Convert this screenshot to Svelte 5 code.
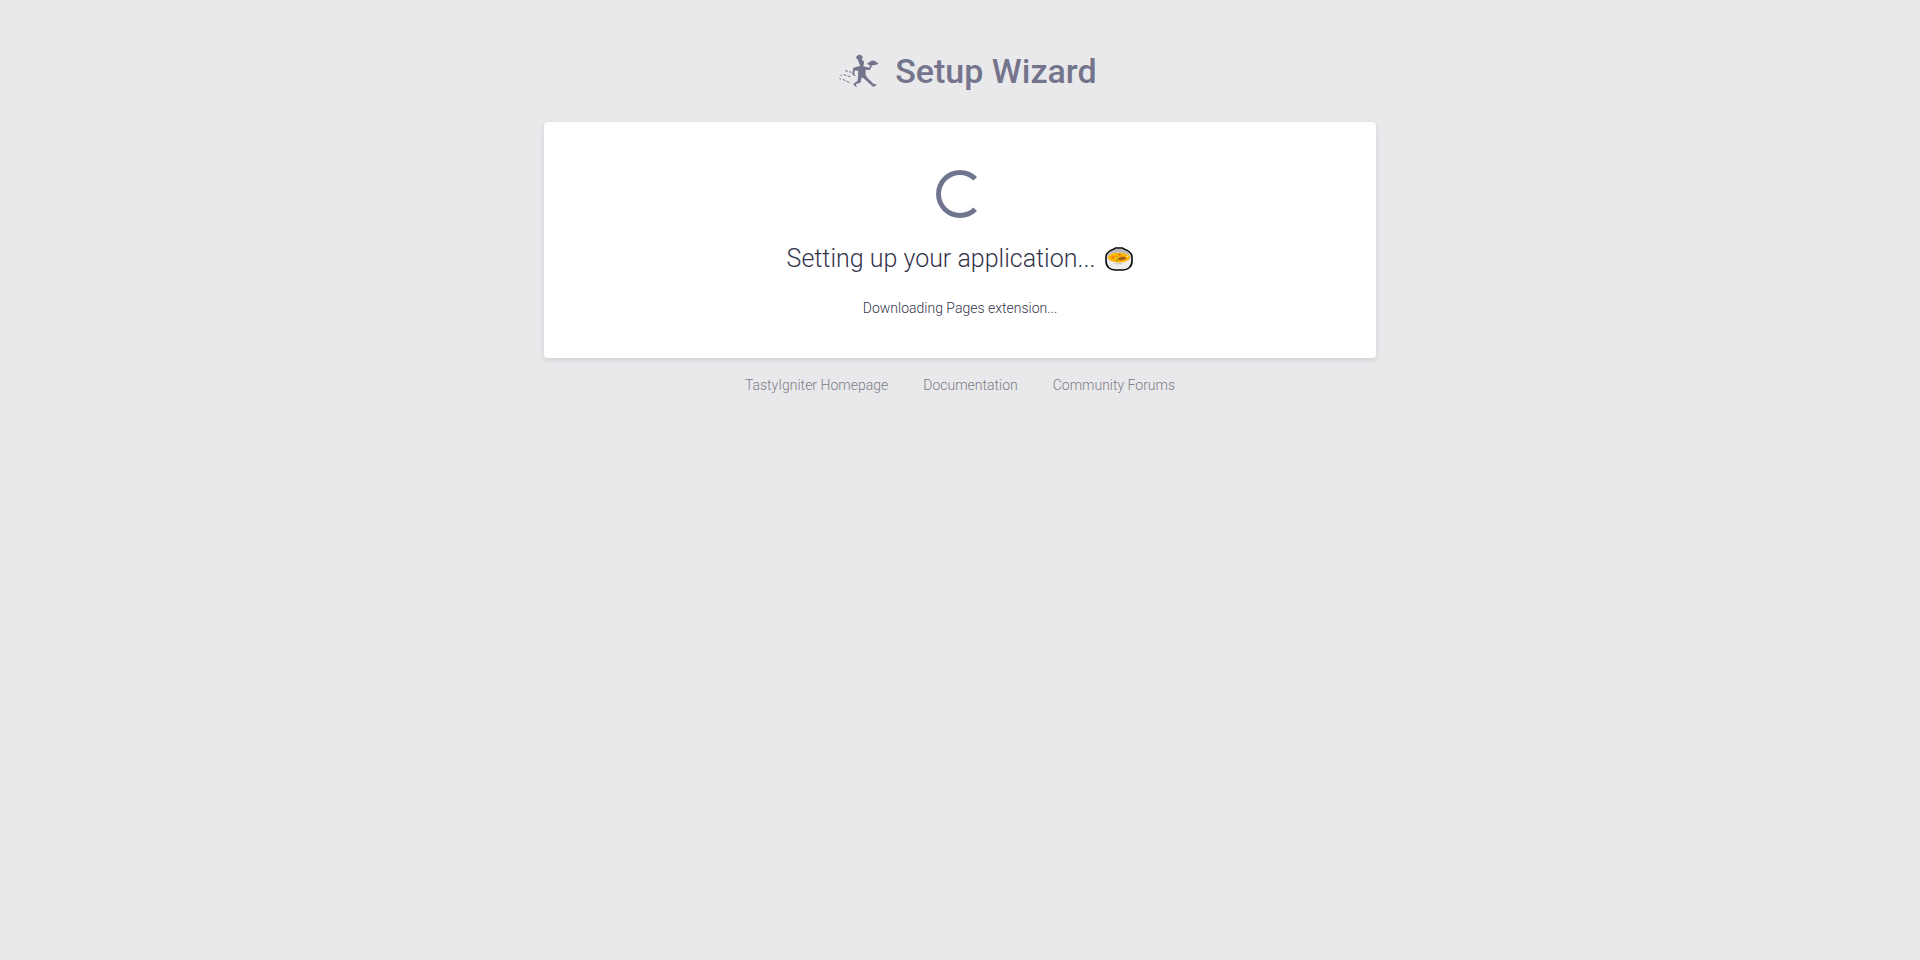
<script lang="ts">
    const title: string = "Setup Wizard";
    let heading: string = "Setting up your application...";
    let message: string = "Downloading Pages extension...";

    const links = [
        { label: "TastyIgniter Homepage", href: "#homepage" },
        { label: "Documentation", href: "#documentation" },
        { label: "Community Forums", href: "#forums" }
    ];
</script>

<div class="page">
    <header>
        <svg class="logo" viewBox="0 0 40 34" aria-hidden="true">
            <g fill="currentColor">
                <path d="M17.2 3.4C17.2 1.7 18.8 1.6 19.6 1.1C20.6 .2 22 .8 22.4 1.6C24 2 24 3.8 23 4.6L23.2 6.8L19.4 7.8L18.8 5.4C17.8 5.2 17.2 4.4 17.2 3.4Z"/>
                <path d="M19.8 7L24 6.2C25.2 7.4 25.5 9.8 24.4 11.2L24.2 13H21.2L21 11.2C20.2 10.2 19.8 8.6 19.8 7Z"/>
                <path d="M28 9.3L30 8.6C31 7.1 32.4 6.6 33.5 6.5C35.6 6.5 37 7.2 37.6 8.6L39.5 9L38 10.6C36 11.6 31 11.6 29.4 10.7Z"/>
                <path d="M14.2 14.2C17 12.6 21.6 12 25.4 12.6L29.8 13.8L31.4 11L33.3 11.2L30.8 16L26.6 15.8C26.8 18 26.3 20 26.8 21.2C28.4 23.8 30.6 26 33 28.2C34.2 29.9 35.4 30.6 37.5 29.9C37.4 31.8 35.6 32.6 33.6 32.5L24.4 24L22.6 23.4L21.6 28.4L16.6 30.2L18 33.3L14.9 31.5L14.6 29.4L18.7 26.7L19.1 21L19.3 16.8L15.6 16.4L15.2 19.8L16.8 22.3L14.8 21.7L13.2 20Z"/>
            </g>
            <path d="M6 16.6L12.4 18.3M4.6 20.7L11.4 22.7M3.8 25.4L11 28.8" fill="none" stroke="currentColor" stroke-dasharray="3 1.2"/>
            <path d="M.4 24.4l1.6.8M1.4 21l1.2.6" stroke="currentColor"/>
        </svg>
        <h1>{title}</h1>
    </header>

    <main class="card">
        <svg class="spinner" viewBox="0 0 48 48" role="img" aria-label="Loading">
            <path d="M41 7A24 24 0 1 0 41 41L37.4 37.4A19 19 0 1 1 37.4 10.6Z" fill="currentColor"/>
        </svg>
        <h2>
            <span>{heading}</span>
            <svg class="bowl" viewBox="0 0 28 24" aria-hidden="true">
                <path d="M9.2 2.1L10.4 1H17.6L18.8 2.1C23.7 4 27 6.6 27 10V14C27 20 22.7 23 18 23H10C5.3 23 1 20 1 14V10C1 6.6 4.3 4 9.2 2.1Z" fill="#eeeeef" stroke="#080808" stroke-width="1.6"/>
                <path d="M10 3L11 2H17L18 3C22.5 4 25.8 6.6 25.8 10H2.2C2.2 6.6 5.5 4 10 3Z" fill="#b9b8ba"/>
                <ellipse cx="14" cy="10.6" rx="12" ry="5.2" fill="#dedede"/>
                <ellipse cx="14" cy="10.6" rx="11.2" ry="4.8" fill="#ffb503"/>
                <path d="M13 12.6C12.6 10.6 15.8 9.5 18 9.8C20.7 9.7 22.2 11.3 20 12.6C18.2 13.5 14.2 13.9 13 12.6Z" fill="#a55d19"/>
                <path d="M6 10.4l3 .8-1.8 1Z" fill="#d87805"/>
                <path d="M10 16H18L17 17.4H11Z" fill="#cfcfd0"/>
                <circle cx="14.6" cy="7.6" r="1" fill="#ef4924"/>
                <circle cx="8.4" cy="10" r="1" fill="#eb6b20"/>
                <circle cx="11.7" cy="13.4" r=".8" fill="#55a63b"/>
                <circle cx="12" cy="9.6" r=".7" fill="#78a92a"/>
                <circle cx="22.4" cy="9.2" r=".8" fill="#fff08c"/>
            </svg>
        </h2>
        <p>{message}</p>
    </main>

    <footer>
        {#each links as link}
            <a href={link.href}>{link.label}</a>
        {/each}
    </footer>
</div>

<style>
    :global(body) {
        margin: 0;
        background-color: #e9e9eb;
    }

    .page {
        box-sizing: border-box;
        max-width: 864px;
        margin: 0 auto;
        padding: 47px 16px;
        font-family: Roboto, "Liberation Sans", sans-serif;
        font-size: 14px;
        font-weight: 300;
        line-height: 20px;
        color: #35354c;
    }

    header {
        display: flex;
        align-items: center;
        justify-content: center;
        gap: 16px;
        margin-bottom: 27px;
        padding-left: 16px;
        color: #74758c;
    }

    .logo {
        width: 40px;
        height: 34px;
    }

    h1 {
        margin: 0;
        font-size: 34px;
        font-weight: 500;
        line-height: 48px;
    }

    .card {
        display: flex;
        flex-direction: column;
        align-items: center;
        padding: 48px 24px 40px;
        border-radius: 4px;
        background-color: #fff;
        box-shadow: 0 2px 5px rgba(60, 60, 90, 0.14);
    }

    .spinner {
        width: 48px;
        height: 48px;
        color: #6e758c;
    }

    h2 {
        display: flex;
        align-items: center;
        gap: 10px;
        margin: 25px 0 23px;
        font-size: 25px;
        font-weight: 300;
        line-height: 32px;
        color: #35354c;
    }

    .bowl {
        width: 28px;
        height: 24px;
    }

    p {
        margin: 0;
    }

    footer {
        display: flex;
        flex-wrap: wrap;
        justify-content: center;
        gap: 8px 35px;
        margin-top: 17px;
    }

    a {
        color: #7d7e89;
        text-decoration: none;
    }

    a:hover {
        text-decoration: underline;
    }
</style>
